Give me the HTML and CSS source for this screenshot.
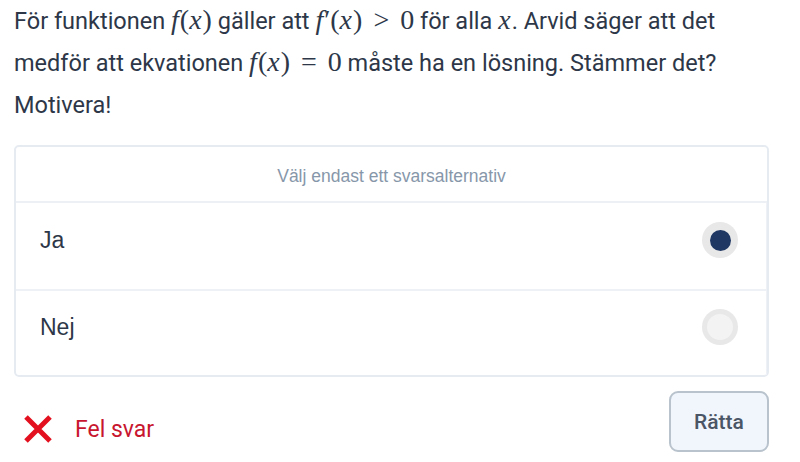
FILE: index.html
```html
<!DOCTYPE html>
<html lang="sv">
<head>
<meta charset="utf-8">
<link rel="stylesheet" href="styles.css">
</head>
<body>
<div class="page">
  <p class="question">För funktionen <span class="math"><i>f</i>(<i>x</i>)</span> gäller att <span class="math"><i>f</i>′(<i>x</i>)<span class="rel">&gt;</span>0</span> för alla <span class="math"><i>x</i></span>. Arvid säger att det medför att ekvationen <span class="math"><i>f</i>(<i>x</i>)<span class="rel">=</span>0</span> måste ha en lösning. Stämmer det? <br>Motivera!</p>

  <div class="card">
    <div class="card-head">Välj endast ett svarsalternativ</div>
    <div class="option">
      <span class="option-label">Ja</span>
      <span class="radio selected"><span class="dot"></span></span>
    </div>
    <div class="option">
      <span class="option-label">Nej</span>
      <span class="radio"><span class="dot"></span></span>
    </div>
  </div>

  <div class="footer">
    <div class="feedback">
      <svg class="cross" width="30" height="28" viewBox="0 0 30 28" aria-hidden="true">
        <path d="M3 2 L27 26 M27 2 L3 26" stroke="#e3101f" stroke-width="5" stroke-linecap="butt" fill="none"/>
      </svg>
      <span class="feedback-text">Fel svar</span>
    </div>
    <button class="check">Rätta</button>
  </div>
</div>
</body>
</html>
```

FILE: styles.css
```css
html, body {
  margin: 0;
  padding: 0;
  background: #ffffff;
}

.page {
  width: 755px;
  margin-left: 14px;
  font-family: Roboto, "Liberation Sans", sans-serif;
  color: #2d3748;
}

.question {
  margin: 0;
  font-size: 23.5px;
  line-height: 42px;
  width: 745px;
}

.math {
  font-family: "Liberation Serif", "DejaVu Serif", serif;
  font-size: 28px;
  line-height: 1;
  color: #2d3748;
}

.math i {
  font-style: italic;
  margin-right: 1px;
}

.math .rel {
  margin: 0 11px;
}

.card {
  margin-top: 19px;
  border: 2px solid #e6ebf2;
  border-radius: 5px;
  display: flex;
  flex-direction: column;
}

.card-head {
  height: 56px;
  box-sizing: border-box;
  display: flex;
  align-items: center;
  justify-content: center;
  font-family: "Liberation Sans", Arial, sans-serif;
  font-size: 17.5px;
  color: #8797aa;
  border-bottom: 2px solid #edf1f6;
  padding-top: 4px;
}

.option {
  height: 86px;
  box-sizing: border-box;
  display: flex;
  align-items: center;
  justify-content: space-between;
  padding: 0 28px 12px 24px;
  border-right: 1px solid #eef1f5;
}

.option + .option {
  border-top: 2px solid #eef2f6;
}

.option-label {
  font-family: "Liberation Sans", Arial, sans-serif;
  font-size: 23px;
  color: #2d3748;
}

.radio {
  width: 36px;
  height: 36px;
  border-radius: 50%;
  background: #e8e8e8;
  display: flex;
  align-items: center;
  justify-content: center;
}

.radio .dot {
  width: 26px;
  height: 26px;
  border-radius: 50%;
  background: #f3f3f3;
}

.radio.selected .dot {
  width: 21px;
  height: 21px;
  background: #1f3763;
}

.footer {
  margin-top: 14px;
  display: flex;
  justify-content: space-between;
  align-items: flex-start;
}

.feedback {
  display: flex;
  align-items: center;
  gap: 22px;
  padding: 24px 0 0 9px;
}

.cross {
  display: block;
}

.feedback-text {
  font-family: Roboto, sans-serif;
  font-size: 23px;
  color: #c8162f;
}

.check {
  width: 100px;
  height: 61px;
  border: 2px solid #b9c3cd;
  border-radius: 9px;
  background: #f1f6fc;
  font-family: Roboto, sans-serif;
  font-weight: 500;
  font-size: 21px;
  color: #4a5565;
  padding: 0;
}
```
